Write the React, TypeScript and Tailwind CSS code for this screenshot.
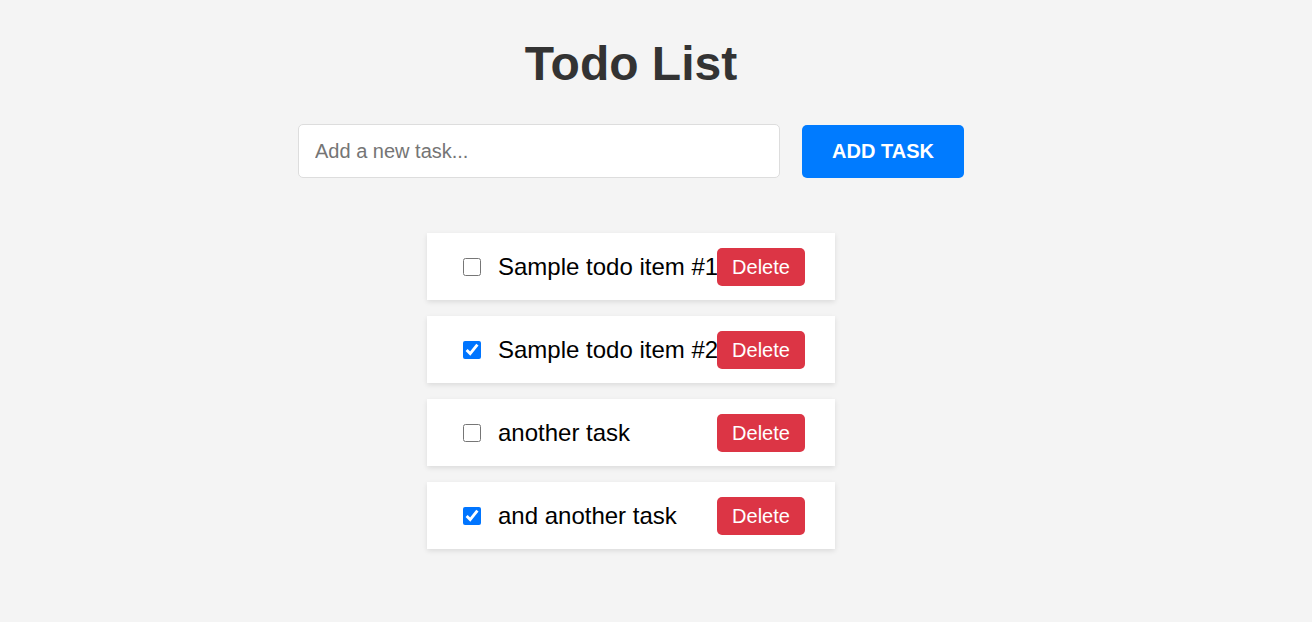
import { useState } from "react";

type Todo = {
  id: number;
  text: string;
  done: boolean;
};

const initialTodos: Todo[] = [
  { id: 1, text: "Sample todo item #1", done: false },
  { id: 2, text: "Sample todo item #2", done: true },
  { id: 3, text: "another task", done: false },
  { id: 4, text: "and another task", done: true },
];

const App = () => {
  const [todos, setTodos] = useState<Todo[]>(initialTodos);
  const [text, setText] = useState("");

  const handleAdd = () => {
    if (!text.trim()) return;
    setTodos([...todos, { id: Date.now(), text, done: false }]);
    setText("");
  };

  const toggle = (id: number) => {
    setTodos(todos.map((t) => (t.id === id ? { ...t, done: !t.done } : t)));
  };

  const remove = (id: number) => {
    setTodos(todos.filter((t) => t.id !== id));
  };

  return (
    <div className="min-h-[622px] bg-[#f4f4f4] pr-[50px] font-['Liberation_Sans',Arial,sans-serif]">
      <div className="flex flex-col items-center pt-[36px]">
        <h1 className="text-[48px] leading-[56px] font-bold text-[#333]">Todo List</h1>

        <div className="mt-[32px] flex items-center gap-[22px]">
          <input
            type="text"
            value={text}
            onChange={(e) => setText(e.target.value)}
            placeholder="Add a new task..."
            className="h-[54px] w-[482px] rounded-[5px] border border-[#ddd] bg-white px-[16px] text-[20px] outline-none placeholder:text-[#757575]"
          />
          <button
            onClick={handleAdd}
            className="h-[53px] w-[162px] rounded-[5px] bg-[#007bff] text-[20px] font-bold text-white uppercase"
          >
            Add Task
          </button>
        </div>

        <ul className="mt-[55px] flex w-[408px] flex-col gap-[16px]">
          {todos.map((todo) => (
            <li
              key={todo.id}
              className="flex h-[67px] items-center bg-white pl-[36px] pr-[30px] shadow-[0_2px_5px_rgba(0,0,0,0.1)]"
            >
              <input
                type="checkbox"
                checked={todo.done}
                onChange={() => toggle(todo.id)}
                className="m-0 h-[18px] w-[18px] shrink-0"
              />
              <span className="ml-[17px] min-w-0 flex-1 whitespace-nowrap text-[24px] text-black">
                {todo.text}
              </span>
              <button
                onClick={() => remove(todo.id)}
                className="w-[88px] shrink-0 rounded-[5px] bg-[#dc3545] py-[7px] text-center text-[20px] leading-[24px] text-white"
              >
                Delete
              </button>
            </li>
          ))}
        </ul>
      </div>
    </div>
  );
};

export default App;
